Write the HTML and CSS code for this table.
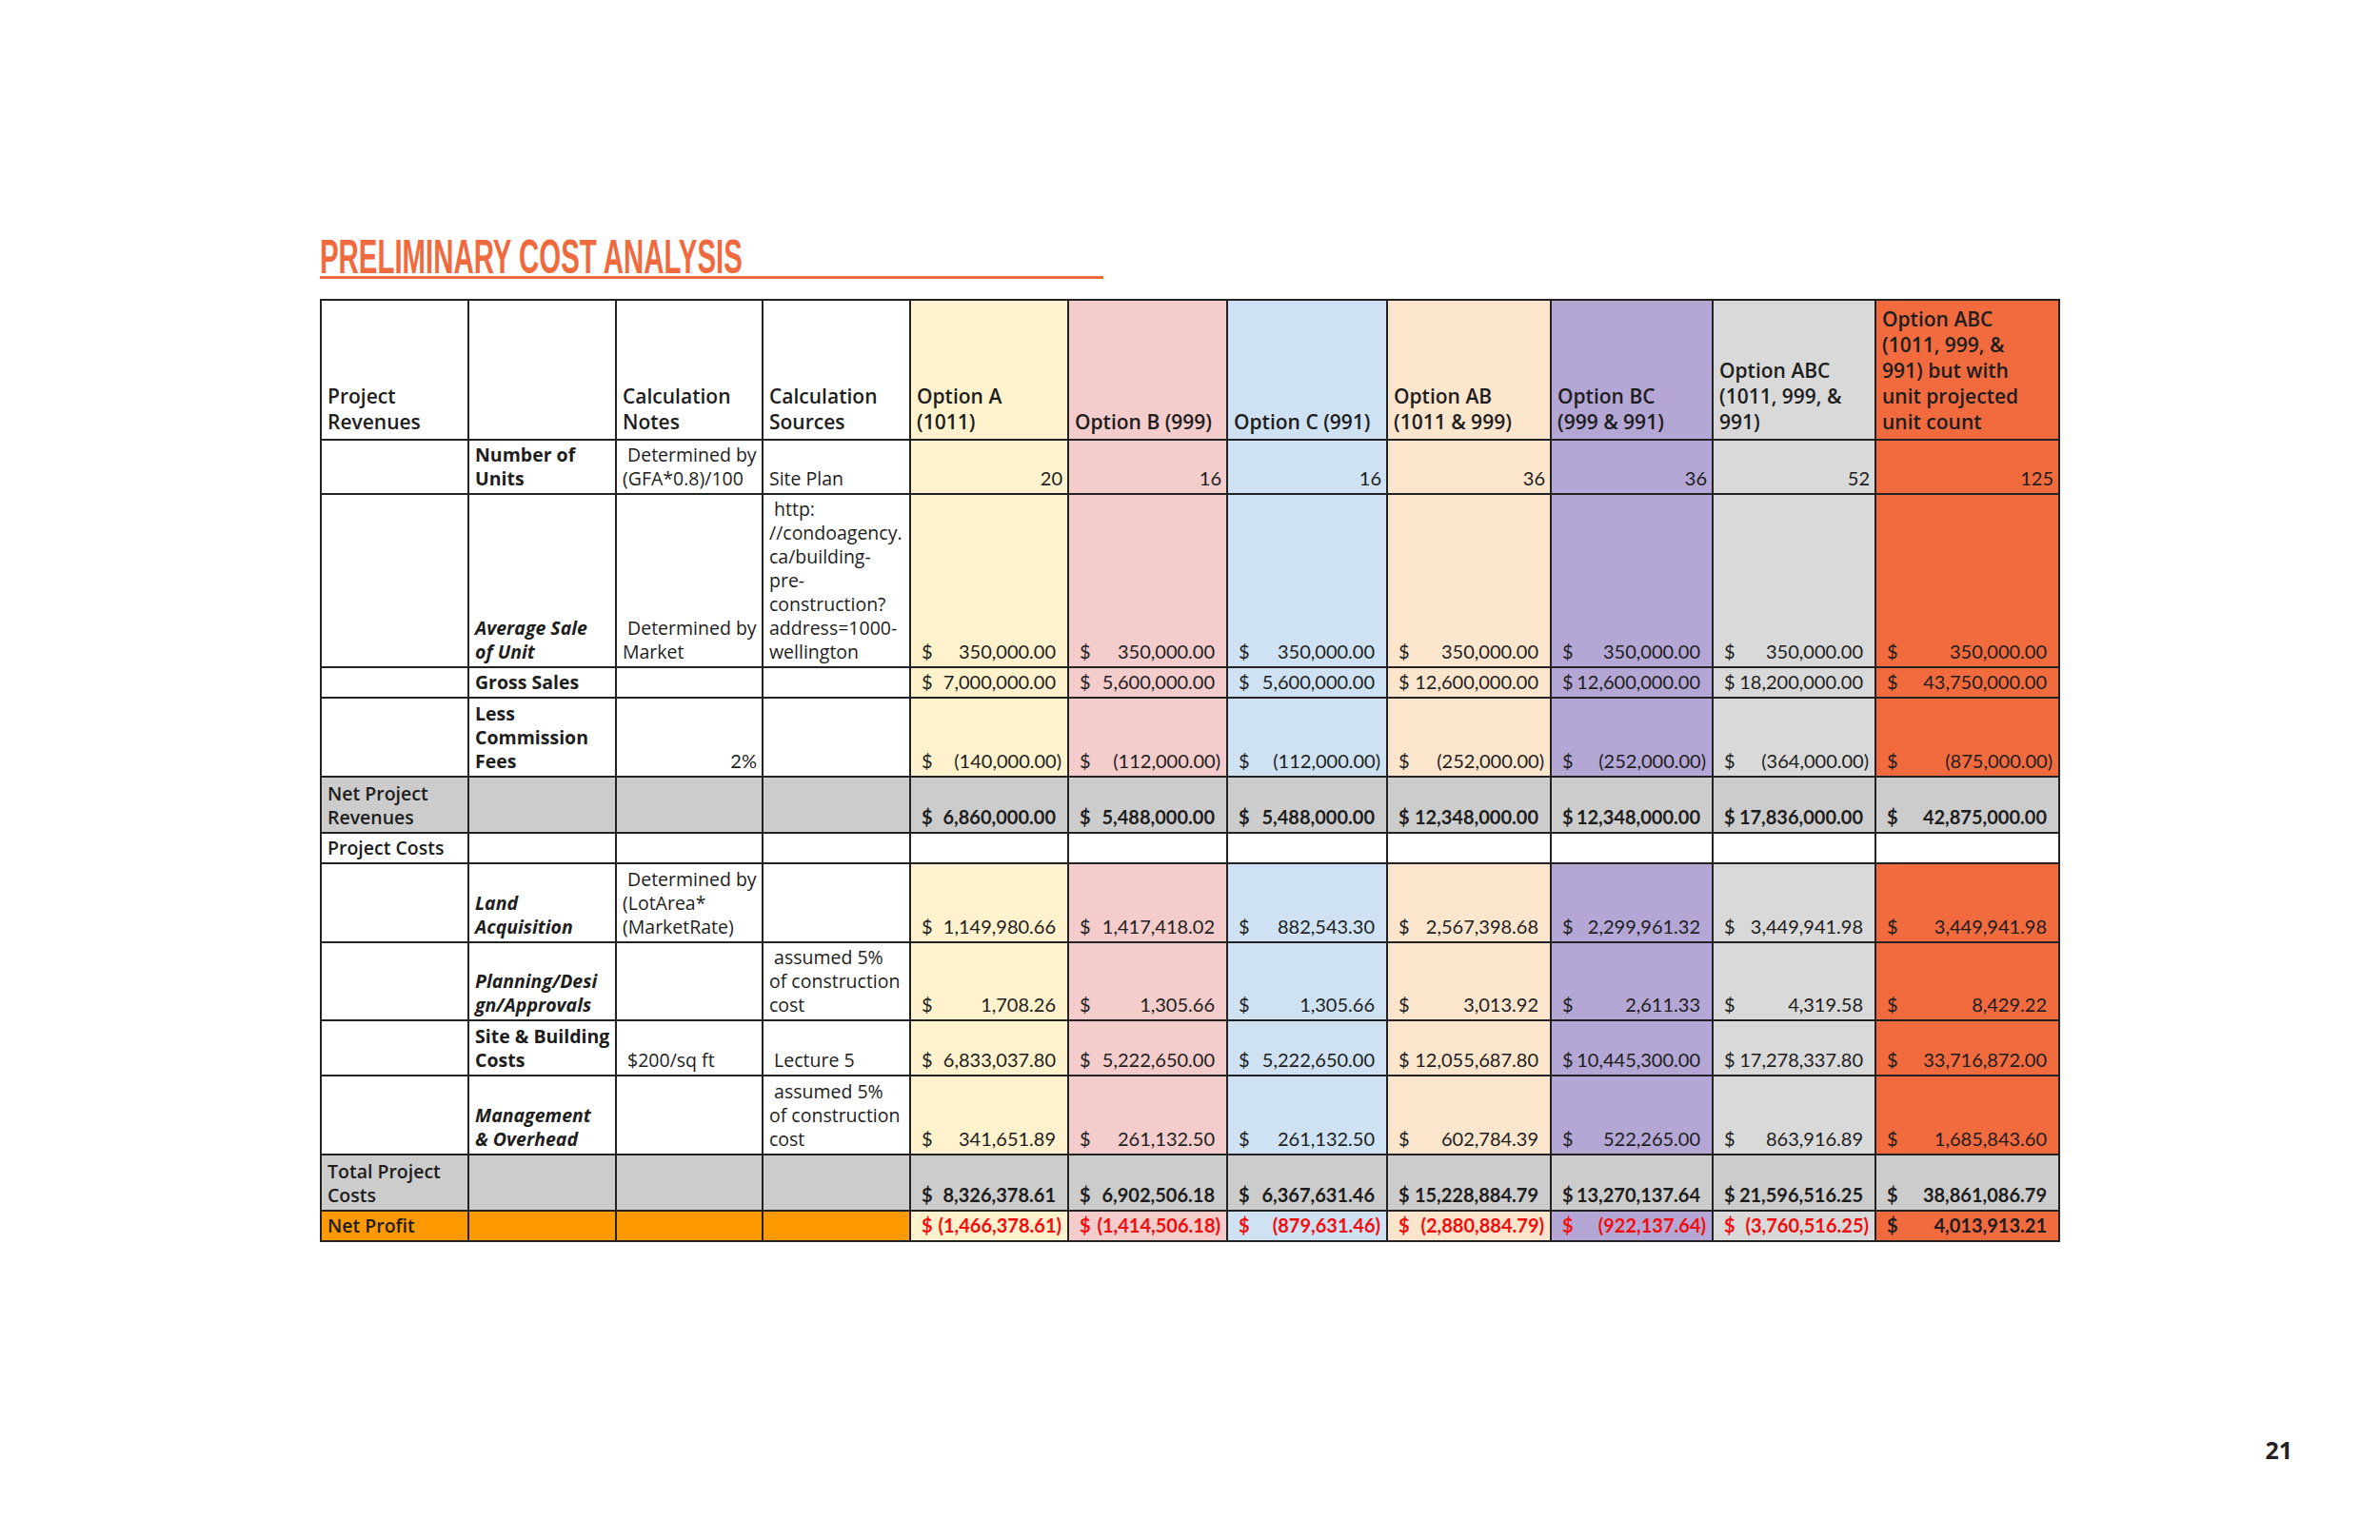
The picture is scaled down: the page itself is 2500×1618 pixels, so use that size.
FILE: index.html
```html
<!DOCTYPE html>
<html lang="en">
<head>
  <meta charset="UTF-8">
  <meta name="viewport" content="width=device-width, initial-scale=1.0">
  <title>Preliminary Cost Analysis</title>
  <link rel="stylesheet" href="styles.css">
</head>
<body>
  <div class="slide">
    <h1 class="title"><span>PRELIMINARY COST ANALYSIS</span></h1>

    <table class="costs">
      <colgroup>
        <col class="w-label">
        <col class="w-label">
        <col class="w-note">
        <col class="w-label">
        <col class="col-a">
        <col class="col-b">
        <col class="col-c">
        <col class="col-ab">
        <col class="col-bc">
        <col class="col-abc">
        <col class="col-full">
      </colgroup>

      <!-- Header -->
      <tr class="r-head">
        <th>Project<br>Revenues</th>
        <th></th>
        <th>Calculation<br>Notes</th>
        <th>Calculation<br>Sources</th>
        <th>Option A<br>(1011)</th>
        <th>Option B (999)</th>
        <th>Option C (991)</th>
        <th>Option AB<br>(1011 &amp; 999)</th>
        <th>Option BC<br>(999 &amp; 991)</th>
        <th>Option ABC<br>(1011, 999, &amp;<br>991)</th>
        <th>Option ABC<br>(1011, 999, &amp;<br>991) but with<br>unit projected<br>unit count</th>
      </tr>

      <!-- Revenues -->
      <tr class="r-units">
        <td></td>
        <td class="item">Number of<br>Units</td>
        <td>&nbsp;Determined by<br>(GFA*0.8)/100</td>
        <td>Site Plan</td>
        <td class="count">20</td>
        <td class="count">16</td>
        <td class="count">16</td>
        <td class="count">36</td>
        <td class="count">36</td>
        <td class="count">52</td>
        <td class="count">125</td>
      </tr>
      <tr class="r-sale">
        <td></td>
        <td class="item it">Average Sale<br>of Unit</td>
        <td>&nbsp;Determined by<br>Market</td>
        <td>&nbsp;http:<br>//condoagency.<br>ca/building-<br>pre-<br>construction?<br>address=1000-<br>wellington</td>
        <td class="acct">$<span>350,000.00</span></td>
        <td class="acct">$<span>350,000.00</span></td>
        <td class="acct">$<span>350,000.00</span></td>
        <td class="acct">$<span>350,000.00</span></td>
        <td class="acct">$<span>350,000.00</span></td>
        <td class="acct">$<span>350,000.00</span></td>
        <td class="acct">$<span>350,000.00</span></td>
      </tr>
      <tr class="r-single">
        <td></td>
        <td class="item">Gross Sales</td>
        <td></td>
        <td></td>
        <td class="acct">$<span>7,000,000.00</span></td>
        <td class="acct">$<span>5,600,000.00</span></td>
        <td class="acct">$<span>5,600,000.00</span></td>
        <td class="acct">$<span>12,600,000.00</span></td>
        <td class="acct">$<span>12,600,000.00</span></td>
        <td class="acct">$<span>18,200,000.00</span></td>
        <td class="acct">$<span>43,750,000.00</span></td>
      </tr>
      <tr class="r-three">
        <td></td>
        <td class="item">Less<br>Commission<br>Fees</td>
        <td class="count">2%</td>
        <td></td>
        <td class="acct">$<span class="neg">(140,000.00)</span></td>
        <td class="acct">$<span class="neg">(112,000.00)</span></td>
        <td class="acct">$<span class="neg">(112,000.00)</span></td>
        <td class="acct">$<span class="neg">(252,000.00)</span></td>
        <td class="acct">$<span class="neg">(252,000.00)</span></td>
        <td class="acct">$<span class="neg">(364,000.00)</span></td>
        <td class="acct">$<span class="neg">(875,000.00)</span></td>
      </tr>
      <tr class="r-sum">
        <td class="lbl">Net Project<br>Revenues</td>
        <td></td>
        <td></td>
        <td></td>
        <td class="acct">$<span>6,860,000.00</span></td>
        <td class="acct">$<span>5,488,000.00</span></td>
        <td class="acct">$<span>5,488,000.00</span></td>
        <td class="acct">$<span>12,348,000.00</span></td>
        <td class="acct">$<span>12,348,000.00</span></td>
        <td class="acct">$<span>17,836,000.00</span></td>
        <td class="acct">$<span>42,875,000.00</span></td>
      </tr>

      <!-- Costs -->
      <tr class="r-blank">
        <td class="lbl">Project Costs</td>
        <td></td><td></td><td></td><td></td><td></td><td></td><td></td><td></td><td></td><td></td>
      </tr>
      <tr class="r-three">
        <td></td>
        <td class="item it">Land<br>Acquisition</td>
        <td>&nbsp;Determined by<br>(LotArea*<br>(MarketRate)</td>
        <td></td>
        <td class="acct">$<span>1,149,980.66</span></td>
        <td class="acct">$<span>1,417,418.02</span></td>
        <td class="acct">$<span>882,543.30</span></td>
        <td class="acct">$<span>2,567,398.68</span></td>
        <td class="acct">$<span>2,299,961.32</span></td>
        <td class="acct">$<span>3,449,941.98</span></td>
        <td class="acct">$<span>3,449,941.98</span></td>
      </tr>
      <tr class="r-plan">
        <td></td>
        <td class="item it">Planning/Desi<br>gn/Approvals</td>
        <td></td>
        <td>&nbsp;assumed 5%<br>of construction<br>cost</td>
        <td class="acct">$<span>1,708.26</span></td>
        <td class="acct">$<span>1,305.66</span></td>
        <td class="acct">$<span>1,305.66</span></td>
        <td class="acct">$<span>3,013.92</span></td>
        <td class="acct">$<span>2,611.33</span></td>
        <td class="acct">$<span>4,319.58</span></td>
        <td class="acct">$<span>8,429.22</span></td>
      </tr>
      <tr class="r-site">
        <td></td>
        <td class="item">Site &amp; Building<br>Costs</td>
        <td>&nbsp;$200/sq ft</td>
        <td>&nbsp;Lecture 5</td>
        <td class="acct">$<span>6,833,037.80</span></td>
        <td class="acct">$<span>5,222,650.00</span></td>
        <td class="acct">$<span>5,222,650.00</span></td>
        <td class="acct">$<span>12,055,687.80</span></td>
        <td class="acct">$<span>10,445,300.00</span></td>
        <td class="acct">$<span>17,278,337.80</span></td>
        <td class="acct">$<span>33,716,872.00</span></td>
      </tr>
      <tr class="r-three">
        <td></td>
        <td class="item it">Management<br>&amp; Overhead</td>
        <td></td>
        <td>&nbsp;assumed 5%<br>of construction<br>cost</td>
        <td class="acct">$<span>341,651.89</span></td>
        <td class="acct">$<span>261,132.50</span></td>
        <td class="acct">$<span>261,132.50</span></td>
        <td class="acct">$<span>602,784.39</span></td>
        <td class="acct">$<span>522,265.00</span></td>
        <td class="acct">$<span>863,916.89</span></td>
        <td class="acct">$<span>1,685,843.60</span></td>
      </tr>
      <tr class="r-sum">
        <td class="lbl">Total Project<br>Costs</td>
        <td></td>
        <td></td>
        <td></td>
        <td class="acct">$<span>8,326,378.61</span></td>
        <td class="acct">$<span>6,902,506.18</span></td>
        <td class="acct">$<span>6,367,631.46</span></td>
        <td class="acct">$<span>15,228,884.79</span></td>
        <td class="acct">$<span>13,270,137.64</span></td>
        <td class="acct">$<span>21,596,516.25</span></td>
        <td class="acct">$<span>38,861,086.79</span></td>
      </tr>

      <!-- Result -->
      <tr class="r-profit">
        <td class="lbl hl">Net Profit</td>
        <td class="hl"></td>
        <td class="hl"></td>
        <td class="hl"></td>
        <td class="acct loss">$<span class="neg">(1,466,378.61)</span></td>
        <td class="acct loss">$<span class="neg">(1,414,506.18)</span></td>
        <td class="acct loss">$<span class="neg">(879,631.46)</span></td>
        <td class="acct loss">$<span class="neg">(2,880,884.79)</span></td>
        <td class="acct loss">$<span class="neg">(922,137.64)</span></td>
        <td class="acct loss">$<span class="neg">(3,760,516.25)</span></td>
        <td class="acct">$<span>4,013,913.21</span></td>
      </tr>
    </table>

    <div class="page-num">21</div>
  </div>
</body>
</html>
```

FILE: styles.css
```css
body {
  margin: 0;
  background: #fff;
  font-family: "Open Sans", Arial, sans-serif;
  color: #1d1d1d;
}
.slide {
  box-sizing: border-box;
  width: 2500px;
  height: 1618px;
  padding: 248px 92px 82px 336px;
  display: flex;
  flex-direction: column;
}

/* Title with the long orange rule under it */
.title {
  width: 823px;
  height: 42px;
  margin: 0;
  border-bottom: 3px solid #ef6b3f;
  font-family: "Liberation Sans", Arial, sans-serif;
  font-size: 50px;
  line-height: 44px;
  font-weight: bold;
  color: #ef6b3f;
  white-space: nowrap;
}
.title span {
  display: inline-block;
  transform: scaleX(0.588);
  transform-origin: left center;
}

/* Spreadsheet table */
.costs {
  width: 1826px;
  margin-top: 21px;
  border-collapse: collapse;
  table-layout: fixed;
  font-size: 19.5px;
  line-height: 25px;
}
.costs th, .costs td {
  border: 2px solid #222;
  padding: 0 5px 3px 6px;
  vertical-align: bottom;
  text-align: left;
  white-space: nowrap;
  overflow: hidden;
}
.costs th {
  font-size: 21px;
  line-height: 27px;
  font-weight: 600;
  padding-bottom: 4px;
}
.w-label { width: 155px; }
.w-note { width: 154px; }
.col-a { width: 166px; background: #fff2cc; }
.col-b { width: 167px; background: #f4cccc; }
.col-c { width: 168px; background: #cfe2f3; }
.col-ab { width: 172px; background: #fce5cd; }
.col-bc { width: 170px; background: #b4a7d6; }
.col-abc { width: 171px; background: #d9d9d9; }
.col-full { width: 193px; background: #f26b3e; }

.r-head { height: 147px; }
.r-units { height: 57px; }
.r-sale { height: 182px; }
.r-single { height: 32px; }
.r-three { height: 83px; }
.r-plan { height: 82px; }
.r-site { height: 58px; }
.r-sum { height: 59px; background: #cccccc; }
.r-blank { height: 32px; background: #fff; }
.r-profit { height: 32px; }

.lbl { font-weight: 600; }
.item { font-weight: 700; }
.item.it { font-style: italic; }
.hl { background: #ff9900; }

.count {
  text-align: right !important;
  font-family: Lato, "Open Sans", sans-serif;
  font-size: 20px;
}
.acct {
  font-family: Lato, "Open Sans", sans-serif;
  font-size: 20px;
  padding-left: 11px !important;
  padding-right: 6px !important;
}
.acct span {
  float: right;
  padding-right: 6px;
}
.acct span.neg {
  padding-right: 0;
}
.r-sum .acct, .r-profit .acct {
  font-weight: bold;
}
.acct.loss {
  color: #f20d0d;
}

.page-num {
  margin-top: auto;
  align-self: flex-end;
  font-size: 25px;
  line-height: 25px;
  font-weight: bold;
  color: #222;
}
```
